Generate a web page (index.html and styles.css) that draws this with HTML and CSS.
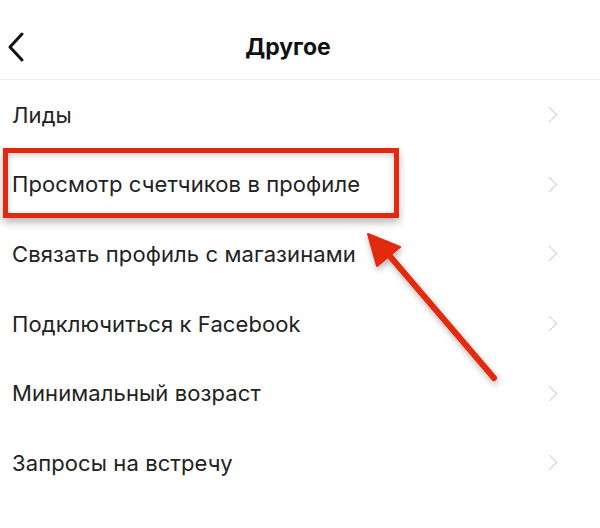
FILE: index.html
```html
<!DOCTYPE html>
<html lang="ru">
<head>
    <meta charset="UTF-8">
    <meta name="viewport" content="width=device-width, initial-scale=1.0">
    <title>Другое</title>
    <link rel="stylesheet" href="styles.css">
</head>
<body>
    <div class="screen">
        <header class="topbar">
            <svg class="back" width="18" height="30" viewBox="0 0 18 30">
                <path d="M15 2 L3 15 L15 28" fill="none" stroke="#111" stroke-width="3" stroke-linecap="round" stroke-linejoin="round"/>
            </svg>
            <h1 class="title">Другое</h1>
        </header>

        <ul class="menu">
            <li class="item"><span>Лиды</span><i class="chev"></i></li>
            <li class="item"><span>Просмотр счетчиков в профиле</span><i class="chev"></i></li>
            <li class="item"><span>Связать профиль с магазинами</span><i class="chev"></i></li>
            <li class="item"><span>Подключиться к Facebook</span><i class="chev"></i></li>
            <li class="item"><span>Минимальный возраст</span><i class="chev"></i></li>
            <li class="item"><span>Запросы на встречу</span><i class="chev"></i></li>
        </ul>

        <!-- выделение и стрелка поверх списка -->
        <div class="highlight"></div>
        <svg class="arrow" width="600" height="528" viewBox="0 0 600 528">
            <defs>
                <filter id="shadow" x="-20%" y="-20%" width="140%" height="140%">
                    <feDropShadow dx="1" dy="3" stdDeviation="3" flood-color="#000" flood-opacity="0.3"/>
                </filter>
            </defs>
            <g filter="url(#shadow)" fill="#e2290f" stroke="#e2290f">
                <line x1="494" y1="378" x2="388" y2="254" stroke-width="6" stroke-linecap="round"/>
                <polygon points="368,234 400,247 377,266" stroke-width="2" stroke-linejoin="round"/>
            </g>
        </svg>
    </div>
</body>
</html>
```

FILE: styles.css
```css
* {
    box-sizing: border-box;
}

body {
    margin: 0;
    background-color: #fff;
    font-family: Inter, "Noto Sans", Arial, sans-serif;
    color: #222;
}

.screen {
    position: relative;
    width: 600px;
    height: 528px;
    overflow: hidden;
}

.topbar {
    position: relative;
    height: 80px;
    border-bottom: 1px solid #ececec;
    display: flex;
    align-items: center;
    justify-content: center;
    padding: 14px 24px 0 0;
}

.back {
    position: absolute;
    left: 7px;
    top: 32px;
}

.title {
    margin: 0;
    font-size: 23px;
    font-weight: 700;
    color: #111;
}

.menu {
    list-style: none;
    margin: 0;
    padding: 0;
}

.item {
    height: 69.6px;
    display: flex;
    align-items: center;
    justify-content: space-between;
    padding: 0 45px 0 12px;
    font-size: 22px;
    letter-spacing: 0.1px;
}

.chev {
    width: 11px;
    height: 11px;
    border-top: 1.5px solid #cfcfcf;
    border-right: 1.5px solid #cfcfcf;
    transform: rotate(45deg);
}

.highlight {
    position: absolute;
    left: 3px;
    top: 148px;
    width: 396px;
    height: 70px;
    border: 5px solid #e2290f;
    box-shadow: 0 4px 8px rgba(0, 0, 0, 0.3), inset 0 2px 6px rgba(0, 0, 0, 0.2);
}

.arrow {
    position: absolute;
    left: 0;
    top: 0;
}
```
